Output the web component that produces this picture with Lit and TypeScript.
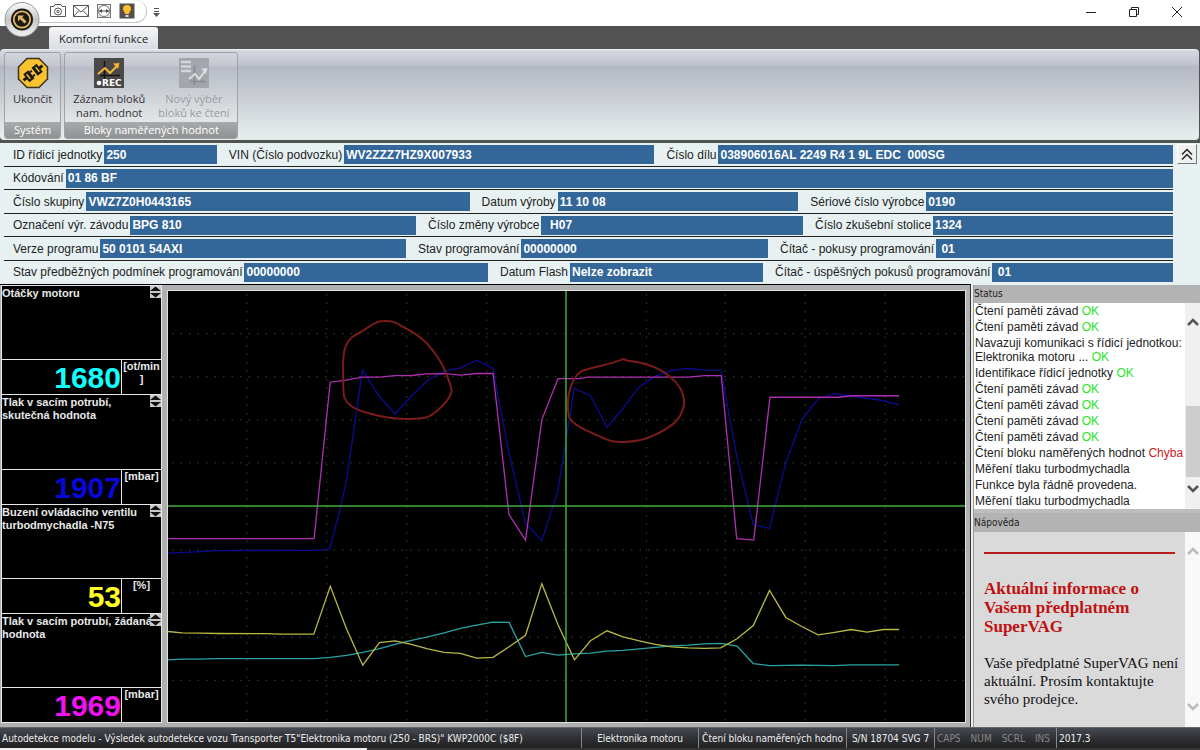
import { LitElement, html, svg, css } from "lit";
import { customElement, property } from "lit/decorators.js";

interface Field {
  id: string;
  label: string;
  value: string;
  span: number;
}

const ROWS: Field[][] = [
  [
    { id: "unit-id", label: "ID řídicí jednotky", value: "250", span: 204 },
    { id: "vin", label: "VIN (Číslo podvozku)", value: "WV2ZZZ7HZ9X007933", span: 426 },
    { id: "part", label: "Číslo dílu", value: "038906016AL 2249 R4 1 9L EDC  000SG", span: 507 },
  ],
  [{ id: "coding", label: "Kódování", value: "01 86 BF", span: 1160 }],
  [
    { id: "group", label: "Číslo skupiny", value: "VWZ7Z0H0443165", span: 457 },
    { id: "made", label: "Datum výroby", value: "11 10 08", span: 317 },
    { id: "serial", label: "Sériové číslo výrobce", value: "0190", span: 363 },
  ],
  [
    { id: "plant", label: "Označení výr. závodu", value: "BPG 810", span: 403 },
    { id: "change", label: "Číslo změny výrobce", value: "  H07", span: 375 },
    { id: "bench", label: "Číslo zkušební stolice", value: "1324", span: 358 },
  ],
  [
    { id: "version", label: "Verze programu", value: "50 0101 54AXI", span: 393 },
    { id: "prog", label: "Stav programování", value: "00000000", span: 350 },
    { id: "tries", label: "Čítač - pokusy programování", value: " 01", span: 393 },
  ],
  [
    { id: "pre", label: "Stav předběžných podmínek programování", value: "00000000", span: 475 },
    { id: "flash", label: "Datum Flash", value: "Nelze zobrazit", span: 263 },
    { id: "success", label: "Čítač - úspěšných pokusů programování", value: " 01", span: 398 },
  ],
];

const GAUGES = [
  { name: "Otáčky motoru", value: "1680", unit: "[ot/min\n]", tone: "cyan" },
  { name: "Tlak v sacím potrubí, skutečná hodnota", value: "1907", unit: "[mbar]", tone: "blue" },
  { name: "Buzení ovládacího ventilu turbodmychadla -N75", value: "53", unit: "[%]", tone: "yellow" },
  { name: "Tlak v sacím potrubí, žádaná hodnota", value: "1969", unit: "[mbar]", tone: "magenta" },
];

const LOG: { text: string; result?: string; ok?: boolean }[] = [
  { text: "Čtení paměti závad", result: "OK", ok: true },
  { text: "Čtení paměti závad", result: "OK", ok: true },
  { text: "Navazuji komunikaci s řídicí jednotkou: Elektronika motoru ...", result: "OK", ok: true },
  { text: "Identifikace řídicí jednotky", result: "OK", ok: true },
  { text: "Čtení paměti závad", result: "OK", ok: true },
  { text: "Čtení paměti závad", result: "OK", ok: true },
  { text: "Čtení paměti závad", result: "OK", ok: true },
  { text: "Čtení paměti závad", result: "OK", ok: true },
  { text: "Čtení bloku naměřených hodnot", result: "Chyba", ok: false },
  { text: "Měření tlaku turbodmychadla" },
  { text: "Funkce byla řádně provedena." },
  { text: "Měření tlaku turbodmychadla" },
];

const GRID_X = [247, 327, 407, 487, 647, 726, 806, 886];
const GRID_Y = [333, 376, 419, 462, 549, 592, 636, 679];

const SERIES = [
  {
    tone: "s-blue",
    points:
      "168,552.5 180,552 200,551 217,550 314,549.7 330,548.5 340,510 346.7,480 362.7,370 379,395.3 395.3,414 411.7,395.7 428,380 444.5,371 461,367.7 477,360 493.3,368.3 509.5,453 526,523 542.3,540 558.5,490 566.5,440 574.7,388 591,395.5 607.5,427 623.6,408 640,386.5 656,376 672,370.3 688,368.3 705,370 721.5,370 737.7,457 754,524 770.3,528 786.6,462 803,418.5 819,398.5 835.5,393.5 852,396 868,398 884.5,400.5 900,404.7",
  },
  {
    tone: "s-magenta",
    points:
      "168,538 314.3,538 330.4,382 346,380 362,377 380,377 395,375.5 412,375.3 427,373.7 446,373.5 461,375 477,373.3 493.5,373.3 509.4,514 526,539.5 542.3,419.3 558.5,378.5 580,378.5 588,377 690,377 705,375.5 722,375.5 737.4,538 754.5,539.5 770.7,397 840,397 852,395.5 900,395.5",
  },
  {
    tone: "s-cyan",
    points:
      "168,659 182,658.3 200,658.3 217,657.7 314,657.7 330.5,656.5 346.7,654.5 363,651.5 379,648 395.3,643.5 411.7,639.5 428,636 444.5,632 460.7,627.5 477,624.3 493.3,621.3 509.5,621.7 526,655.7 542,651.5 558.5,654.3 574.7,653 591,652.3 607,650.3 623.6,649.5 640,648 656,646.5 672.5,645 688.7,644.3 705,643 721.5,642.5 737.7,645.3 754,662.7 770.3,664.7 803,664.3 835,664.7 852,664 900,664",
  },
  {
    tone: "s-yellow",
    points:
      "168,630.7 182,632 200,632.3 217,632.7 265,632.8 280,633.3 314,633.3 330.5,585.7 346.7,628 363,664.3 379.7,641.7 395.3,640 411.7,643.5 428,648 444.5,651.5 460.7,652.5 477,657.3 493.5,656.5 509.5,646 526,634.5 542.3,583 558.5,624 575,659 591,640 607.5,630 623.6,636 640,640 656,643.5 672.5,646 688.7,647 705,647.5 721.5,647 737.7,638 754,624.7 770.3,589.7 786.6,616.7 803,626 819,634 835.5,631.5 852,628.7 868,631.3 884.5,628.7 900,628.7",
  },
];

@customElement("sv-ribbon")
export class SvRibbon extends LitElement {
  static styles = css`
    :host {
      display: block;
      position: relative;
      font-family: "Open Sans", "Noto Sans", sans-serif;
      font-size: 11px;
      color: #333;
    }
    button {
      border: 0;
      padding: 0;
      margin: 0;
      background: none;
      font: inherit;
      color: inherit;
      display: block;
    }
    svg {
      display: block;
    }
    .titlebar {
      display: flex;
      justify-content: space-between;
      height: 26px;
      background: #fff;
    }
    .quick {
      display: flex;
      align-items: flex-start;
      gap: 6px;
      padding-left: 38px;
    }
    .quick-box {
      display: flex;
      align-items: flex-start;
      gap: 7px;
      height: 19px;
      padding: 3px 11px 0 12px;
      border: 1px solid #c4c4c4;
      border-left: 0;
      border-top: 0;
      border-radius: 0 12px 12px 0;
    }
    .more {
      padding-top: 8px;
    }
    .window {
      display: flex;
      padding-right: 2px;
    }
    .window button {
      width: 43px;
      height: 24px;
      display: grid;
      place-items: center;
    }
    .orb {
      position: absolute;
      left: 4px;
      top: 1px;
    }
    .tabs {
      display: flex;
      height: 23px;
      padding-left: 49px;
      background: #525252;
      align-items: flex-end;
    }
    .tab {
      height: 22px;
      padding: 0 10px;
      border-radius: 3px 3px 0 0;
      background: linear-gradient(#f4f6f8, #d9dce2);
      color: #222;
      line-height: 24px;
    }
    .body {
      display: flex;
      align-items: flex-start;
      gap: 3px;
      height: 91px;
      margin-right: 1px;
      padding: 2px 4px 0;
      box-sizing: border-box;
      border-top: 1px solid #eceef1;
      border-radius: 4px;
      background: linear-gradient(#d6d9df 0, #bfc3cd 15px, #b3b8c3 16px, #c8ccd2 45px, #e4ecec 85px);
    }
    .wrap {
      background: #525252;
      border-bottom: 3px solid #50544f;
    }
    .group {
      display: flex;
      flex-direction: column;
      height: 87px;
      box-sizing: border-box;
      border: 1px solid #9ea1a7;
      border-radius: 3px;
      overflow: hidden;
      background: linear-gradient(#d3d5dc 0, #c3c6cf 13px, #b8bcc6 14px, #d0d4d9 45px, #e2e7e7 70px);
    }
    .tools {
      flex: 1;
      display: flex;
      gap: 13px;
      padding: 4px 8px 0;
    }
    .tool {
      display: flex;
      flex-direction: column;
      align-items: center;
      gap: 3px;
      line-height: 14px;
      text-align: center;
    }
    .tool[disabled] {
      color: #9a9ca0;
    }
    .caption {
      height: 16px;
      line-height: 16px;
      text-align: center;
      color: #fff;
      background: linear-gradient(#a8abab, #8f9292);
    }
    .rec {
      font: bold 9px "DejaVu Sans", sans-serif;
      fill: #fff;
    }
  `;

  render() {
    return html`
      <div class="titlebar">
        <div class="quick">
          <div class="quick-box">
            <button aria-label="Snímek">
              <svg width="16" height="16" fill="none" stroke="#555">
                <path d="M.5 3.500h3.500l1-2h6l1 2h3.500v10h-15z" />
                <circle cx="8" cy="8.500" r="3.500" />
                <circle cx="8" cy="8.500" r="1.200" />
              </svg>
            </button>
            <button aria-label="Zpráva">
              <svg width="16" height="16" fill="none" stroke="#555">
                <path d="M.5 2.500h15v11h-15zM.5 2.500L8 9 15.500 2.500M.5 13.500l5.500-6M15.500 13.500L10 7.500" />
              </svg>
            </button>
            <button aria-label="Vzdálená pomoc">
              <svg width="16" height="16" fill="none" stroke="#777">
                <rect x="1.500" y="1.500" width="13" height="13" fill="#e8e8e8" />
                <circle cx="8" cy="8" r="5.500" fill="#fff" />
                <path d="M3.500 8h9" stroke="#444" />
                <path d="M6 6L3 8l3 2zM10 6L13 8l-3 2z" fill="#444" stroke="none" />
              </svg>
            </button>
            <button aria-label="Rada">
              <svg width="16" height="16">
                <rect x=".5" y=".5" width="15" height="15" fill="#555049" />
                <path d="M8 2a4 4 0 0 1 4 4c0 2-1.800 2.800-2 5H6C5.800 8.800 4 8 4 6a4 4 0 0 1 4-4z" fill="#fdbf2d" />
                <path d="M6.500 12h3v2h-3z" fill="#ddd" />
              </svg>
            </button>
          </div>
          <button class="more" aria-label="Další">
            <svg width="7" height="9" fill="#555">
              <path d="M1 0h5v1H1zM1 3h5v1H1zM0 5h7L3.500 9z" />
            </svg>
          </button>
        </div>
        <div class="window">
          <button aria-label="Minimalizovat">
            <svg width="12" height="12" stroke="#222" fill="none"><path d="M1 6.500h10" /></svg>
          </button>
          <button aria-label="Obnovit">
            <svg width="12" height="12" stroke="#222" fill="none">
              <path d="M1.500 3.500h7v7h-7zM3.500 3.500v-2h7v7h-2" />
            </svg>
          </button>
          <button aria-label="Zavřít">
            <svg width="12" height="12" stroke="#222" fill="none"><path d="M1 1l10 10M11 1L1 11" /></svg>
          </button>
        </div>
      </div>
      <div class="tabs"><button class="tab">Komfortní funkce</button></div>
      <div class="wrap">
        <div class="body">
          <section class="group">
            <div class="tools">
              <button class="tool">
                <svg width="32" height="32">
                  <path
                    d="M10 1.500h12l8.500 8.500v12L22 30.500H10L1.500 22V10z"
                    fill="#f9c22e"
                    stroke="#3a3320"
                    stroke-width="1.500"
                  />
                  <g transform="rotate(-38 16 16)" fill="#1c1a14">
                    <path d="M4 14.500h4v3H4zM24 14.500h4v3h-4z" />
                    <path d="M7.500 11h6.500v10H7.500zM18 11h6.500v10H18z" />
                    <path d="M14 12.500h2.500v2H14zM14 17.500h2.500v2H14z" />
                    <path d="M9.500 13h1.500v6H9.500zM21 13h1.500v6H21z" fill="#f9c22e" />
                  </g>
                </svg>
                <span>Ukončit</span>
              </button>
            </div>
            <div class="caption">Systém</div>
          </section>
          <section class="group">
            <div class="tools">
              <button class="tool">
                <svg width="32" height="32">
                  <rect x="1" y="1" width="30" height="30" fill="#4a4848" />
                  <path d="M11.500 4v18M7 18.500h20" stroke="#17150f" stroke-width="1.500" />
                  <path d="M5 17l7-6 5 5 7-7" fill="none" stroke="#f5b731" stroke-width="2" />
                  <path d="M20 6.500l6.500-.500-1.500 6z" fill="#f5b731" />
                  <circle cx="6" cy="26" r="2.300" fill="#fff" />
                  <text class="rec" x="9" y="29">REC</text>
                </svg>
                <span>Záznam bloků<br />nam. hodnot</span>
              </button>
              <button class="tool" disabled>
                <svg width="32" height="32">
                  <rect x="1" y="1" width="30" height="30" fill="#a3a6ab" />
                  <path d="M3 5h10M3 9.500h10M3 14h10" stroke="#d3d5d8" stroke-width="2.500" />
                  <path d="M16.500 8v20M12 24.500h16" stroke="#868a8f" stroke-width="1.500" />
                  <path d="M11 22l6-5 4 5 6-8" fill="none" stroke="#d9dbdd" stroke-width="2" />
                  <path d="M23 11.500l6.500-.500-1.500 6z" fill="#d9dbdd" />
                </svg>
                <span>Nový výběr<br />bloků ke čtení</span>
              </button>
            </div>
            <div class="caption">Bloky naměřených hodnot</div>
          </section>
        </div>
      </div>
      <button class="orb" aria-label="Nabídka">
        <svg width="37" height="37">
          <defs>
            <linearGradient id="rim" x2="0" y2="1">
              <stop offset="0" stop-color="#fdfdfd" />
              <stop offset=".5" stop-color="#c4c6c8" />
              <stop offset="1" stop-color="#f2f2f2" />
            </linearGradient>
          </defs>
          <circle cx="18" cy="18.500" r="17" fill="url(#rim)" stroke="#999" />
          <circle cx="18" cy="18.500" r="11" fill="#1d1a14" />
          <circle cx="18" cy="18.500" r="8.200" fill="none" stroke="#e3b768" stroke-width="1.800" />
          <path d="M14 14.500h6l-1.800 1.800 4.300 4.200-2 2-4.300-4.300L14 20.500z" fill="#e3b768" />
        </svg>
      </button>
    `;
  }
}

@customElement("sv-identity")
export class SvIdentity extends LitElement {
  static styles = css`
    :host {
      display: flex;
      align-items: flex-start;
      gap: 4px;
      padding: 0 3px 0 4px;
      background: #e8f1f2;
      font: 12px "Liberation Sans", Arial, sans-serif;
      color: #222;
    }
    .rows {
      flex: 1;
      display: grid;
      grid-template-rows: repeat(6, 1fr);
      height: 141px;
    }
    .row {
      display: flex;
      align-items: flex-start;
      gap: 12px;
      padding: 2px 0 0 9px;
      border-bottom: 1px solid #222;
      box-sizing: border-box;
    }
    .row:last-child {
      border-bottom: 0;
    }
    .field {
      display: flex;
      align-items: center;
      gap: 2px;
      min-width: 0;
    }
    label {
      white-space: nowrap;
    }
    input {
      flex: 1;
      min-width: 0;
      width: 0;
      height: 19px;
      box-sizing: border-box;
      border: 0;
      border-radius: 0;
      padding: 0 2px;
      background: #336699;
      color: #fff;
      font: bold 12px "Liberation Sans", Arial, sans-serif;
    }
    .collapse {
      width: 20px;
      height: 20px;
      margin-top: 1px;
      padding: 0;
      display: grid;
      place-items: center;
      background: #f0f0f0;
      border: 1px solid;
      border-color: #fff #777 #777 #fff;
    }
  `;

  render() {
    return html`
      <div class="rows">
        ${ROWS.map(
          (row) => html`<div class="row">
            ${row.map(
              (f) => html`<div class="field" style="flex:${f.span} 1 0px">
                <label for=${f.id}>${f.label}</label>
                <input id=${f.id} readonly .value=${f.value} />
              </div>`
            )}
          </div>`
        )}
      </div>
      <button class="collapse" aria-label="Sbalit">
        <svg width="14" height="14" fill="none" stroke="#222" stroke-width="1.500">
          <path d="M2 7.500l5-5 5 5M2 12.500l5-5 5 5" />
        </svg>
      </button>
    `;
  }
}

@customElement("sv-gauge")
export class SvGauge extends LitElement {
  @property() name = "";
  @property() value = "";
  @property() unit = "";
  @property() tone = "";

  static styles = css`
    :host {
      display: flex;
      flex-direction: column;
      box-sizing: border-box;
      border: 1px solid #e8e8e8;
      border-bottom: 0;
      background: #000;
      color: #e8e8e8;
      font: bold 11px/13px "Liberation Sans", Arial, sans-serif;
    }
    .head {
      flex: 1;
      display: flex;
      align-items: flex-start;
      justify-content: space-between;
    }
    .name {
      flex: 1;
      min-width: 0;
      padding-top: 1px;
      margin-right: -4px;
    }
    .spin {
      flex: none;
      width: 11px;
      height: 12px;
      padding: 0;
      border: 0;
      background: #c8c8c8;
    }
    svg {
      display: block;
    }
    .foot {
      display: grid;
      grid-template-columns: 1fr 40px;
      height: 34px;
      border-top: 1px solid #e8e8e8;
    }
    .value {
      text-align: right;
      font-size: 30px;
      line-height: 35px;
    }
    .unit {
      border-left: 1px solid #e8e8e8;
      text-align: center;
      white-space: pre-line;
    }
    .cyan {
      color: #1ff;
    }
    .blue {
      color: #0808dc;
    }
    .yellow {
      color: #ff2;
    }
    .magenta {
      color: #f012f0;
    }
  `;

  render() {
    return html`
      <div class="head">
        <span class="name">${this.name}</span>
        <button class="spin" aria-label="Vybrat hodnotu">
          <svg width="11" height="12"><path d="M0 5l5.500-4.500L11 5zM0 7h11l-5.500 4.500z" fill="#111" /></svg>
        </button>
      </div>
      <div class="foot">
        <span class="value ${this.tone}">${this.value}</span>
        <span class="unit">${this.unit}</span>
      </div>
    `;
  }
}

@customElement("sv-scope")
export class SvScope extends LitElement {
  static styles = css`
    :host {
      display: block;
      min-width: 0;
      min-height: 0;
      border: 1px solid #e0e0e0;
      background: #000;
      overflow: hidden;
    }
    svg {
      display: block;
      width: 100%;
      height: 100%;
    }
    path,
    line,
    polyline {
      fill: none;
      vector-effect: non-scaling-stroke;
    }
    .grid {
      stroke: #2c4a2c;
      stroke-width: 1;
      stroke-dasharray: 1.500 7;
    }
    .cross {
      stroke: #3fae3f;
      stroke-width: 1.500;
    }
    .mark {
      stroke: #7c1c18;
      stroke-width: 2;
    }
    .s-blue {
      stroke: #0c0c92;
      stroke-width: 1.300;
    }
    .s-magenta {
      stroke: #b02fb0;
      stroke-width: 1.300;
    }
    .s-cyan {
      stroke: #2aa3a3;
      stroke-width: 1.300;
    }
    .s-yellow {
      stroke: #b9b944;
      stroke-width: 1.300;
    }
  `;

  render() {
    return html`<svg viewBox="168 291 798 430" preserveAspectRatio="none" role="img" aria-label="Průběh hodnot">
      ${GRID_X.map((x) => svg`<line class="grid" x1=${x} y1="294" x2=${x} y2="721" />`)}
      ${GRID_Y.map((y) => svg`<line class="grid" x1="172" y1=${y + 0.5} x2="966" y2=${y + 0.5} />`)}
      ${SERIES.map((s) => svg`<polyline class=${s.tone} points=${s.points} />`)}
      <path class="cross" d="M168 505.500H966M566.500 291V721" />
      <path
        class="mark"
        d="M343.500 375C343 362 343 352 346 346C349 338 355 335 364 330C373 324 377 321 384 321C392 320.500 396 322 402 326C414 332 420 336 427 343C436 353 442 362 446 372C449 380 452 386 452 391C451 397 445 404 437 411C431 416 426 418 422 418C412 419 404 419 395 418C382 417 372 414 362 411C353 408 347 404 344.500 397C343 391 343.500 383 343.500 375Z"
      />
      <path
        class="mark"
        d="M621 360L624 359L628 360.500C636 361 645 363 655 367C668 373 676 380 681 388C685 396 686 404 683 410C681 418 675 424 666 429C656 435 648 438 640 440C630 442 618 442 613 441C605 439 596 434 589 431C580 427 573 423 570 418C568 411 568 403 569 395C571 385 574 376 582 371C592 367 606 365 615 362L621 360"
      />
    </svg>`;
  }
}

@customElement("sv-sidebar")
export class SvSidebar extends LitElement {
  static styles = css`
    :host {
      display: flex;
      flex-direction: column;
      min-height: 0;
      border-left: 1px solid #999;
      background: #fff;
    }
    h2 {
      margin: 0;
      font: 10px/18px "DejaVu Sans Condensed", "Open Sans", sans-serif;
      color: #222;
      background: #b3b3b3;
    }
    .second {
      border-top: 4px solid #bdbdbd;
      line-height: 19px;
    }
    .pane {
      display: grid;
      grid-template-columns: 1fr 15px;
      min-height: 0;
    }
    .log {
      height: 206px;
      font: 12px/14px "Liberation Sans", Arial, sans-serif;
      color: #222;
    }
    .lines {
      padding: 1px 0 0 1px;
      display: flex;
      flex-direction: column;
      gap: 2px;
    }
    .ok {
      color: #25e625;
    }
    .bad {
      color: #d01818;
    }
    p {
      margin: 0;
    }
    .help {
      flex: 1;
      background: #dadada;
      font: 15px/18px "Liberation Serif", serif;
      color: #111;
    }
    .doc {
      padding: 20px 2px 0 10px;
    }
    hr {
      margin: 0 8px 25px 0;
      border: 0;
      height: 2px;
      background: #b81c1c;
    }
    h3 {
      margin: 0 0 18px;
      font-size: 17px;
      line-height: 19px;
      color: #c01010;
    }
    .bar {
      display: flex;
      flex-direction: column;
      align-items: center;
      padding: 15px 0 16px;
      box-sizing: border-box;
      background: #f0f0f0;
    }
    .help .bar {
      background: #f8f8f8;
      justify-content: space-between;
      padding-bottom: 16px;
    }
    .thumb {
      width: 14px;
      height: 71px;
      margin: 80px 0 8px;
      background: #cdcdcd;
    }
    .log svg {
      stroke: #555;
    }
    .help svg {
      stroke: #bbb;
    }
    svg {
      display: block;
      fill: none;
      stroke-width: 2.500;
    }
  `;

  render() {
    const up = html`<svg width="12" height="8"><path d="M1 7l5-5 5 5" /></svg>`;
    const down = html`<svg width="12" height="8"><path d="M1 1l5 5 5-5" /></svg>`;
    return html`
      <h2>Status</h2>
      <div class="pane log">
        <div class="lines">
          ${LOG.map(
            (l) =>
              html`<p>${l.text} ${l.result ? html`<span class=${l.ok ? "ok" : "bad"}>${l.result}</span>` : ""}</p>`
          )}
        </div>
        <div class="bar">${up}<span class="thumb"></span>${down}</div>
      </div>
      <h2 class="second">Nápověda</h2>
      <div class="pane help">
        <div class="doc">
          <hr />
          <h3>Aktuální informace o Vašem předplatném SuperVAG</h3>
          <p>Vaše předplatné SuperVAG není aktuální. Prosím kontaktujte svého prodejce.</p>
        </div>
        <div class="bar">${up}${down}</div>
      </div>
    `;
  }
}

@customElement("app-root")
export class AppRoot extends LitElement {
  static styles = css`
    :host {
      display: flex;
      flex-direction: column;
      height: 100vh;
      overflow: hidden;
      background: #e8f1f2;
    }
    .main {
      flex: 1;
      min-height: 0;
      display: grid;
      grid-template-columns: 1fr 229px;
    }
    .left {
      min-width: 0;
      min-height: 0;
      display: grid;
      grid-template-columns: 161px 1fr;
      gap: 5px;
      padding: 0 4px 4px 1px;
      border-top: 1px solid #000;
      border-right: 1px solid #333;
      background: #b0b0b0;
    }
    .gauges {
      display: grid;
      grid-template-rows: repeat(4, 1fr);
      border-bottom: 1px solid #e8e8e8;
    }
    .plot {
      margin-top: 5px;
    }
    .side {
      margin: 1px 0 0 2px;
    }
    .status {
      display: flex;
      height: 20px;
      border-top: 1px solid #666;
      background: linear-gradient(#454951, #2c2d31 60%, #222);
      font: 10px/21px "DejaVu Sans Condensed", "Open Sans", sans-serif;
      color: #eee;
      white-space: nowrap;
    }
    .cell {
      padding: 0 2px;
      border-left: 1px solid #888;
      box-sizing: border-box;
      text-align: center;
      overflow: hidden;
    }
    .path {
      flex: 1;
      border-left: 0;
      text-align: left;
    }
    .w-unit {
      width: 117px;
    }
    .w-task {
      width: 148px;
    }
    .w-serial {
      width: 88px;
    }
    .w-keys {
      width: 122px;
      display: flex;
      justify-content: space-between;
      padding-right: 6px;
      color: #888;
    }
    .w-version {
      width: 144px;
      text-align: left;
    }
    .desk {
      display: flex;
      height: 2px;
      background: #333;
    }
    .desk span {
      width: 367px;
      background: #eee;
    }
  `;

  render() {
    return html`
      <sv-ribbon></sv-ribbon>
      <sv-identity></sv-identity>
      <div class="main">
        <div class="left">
          <div class="gauges">
            ${GAUGES.map(
              (g) => html`<sv-gauge .name=${g.name} .value=${g.value} .unit=${g.unit} .tone=${g.tone}></sv-gauge>`
            )}
          </div>
          <sv-scope class="plot"></sv-scope>
        </div>
        <sv-sidebar class="side"></sv-sidebar>
      </div>
      <footer class="status">
        <span class="cell path"
          >Autodetekce modelu - Výsledek autodetekce vozu Transporter T5"Elektronika motoru (250 - BRS)" KWP2000C
          ($8F)</span
        >
        <span class="cell w-unit">Elektronika motoru</span>
        <span class="cell w-task">Čtení bloku naměřených hodno</span>
        <span class="cell w-serial">S/N 18704 SVG 7</span>
        <span class="cell w-keys"><span>CAPS</span><span>NUM</span><span>SCRL</span><span>INS</span></span>
        <span class="cell w-version">2017.3</span>
      </footer>
      <div class="desk"><span></span></div>
    `;
  }
}
